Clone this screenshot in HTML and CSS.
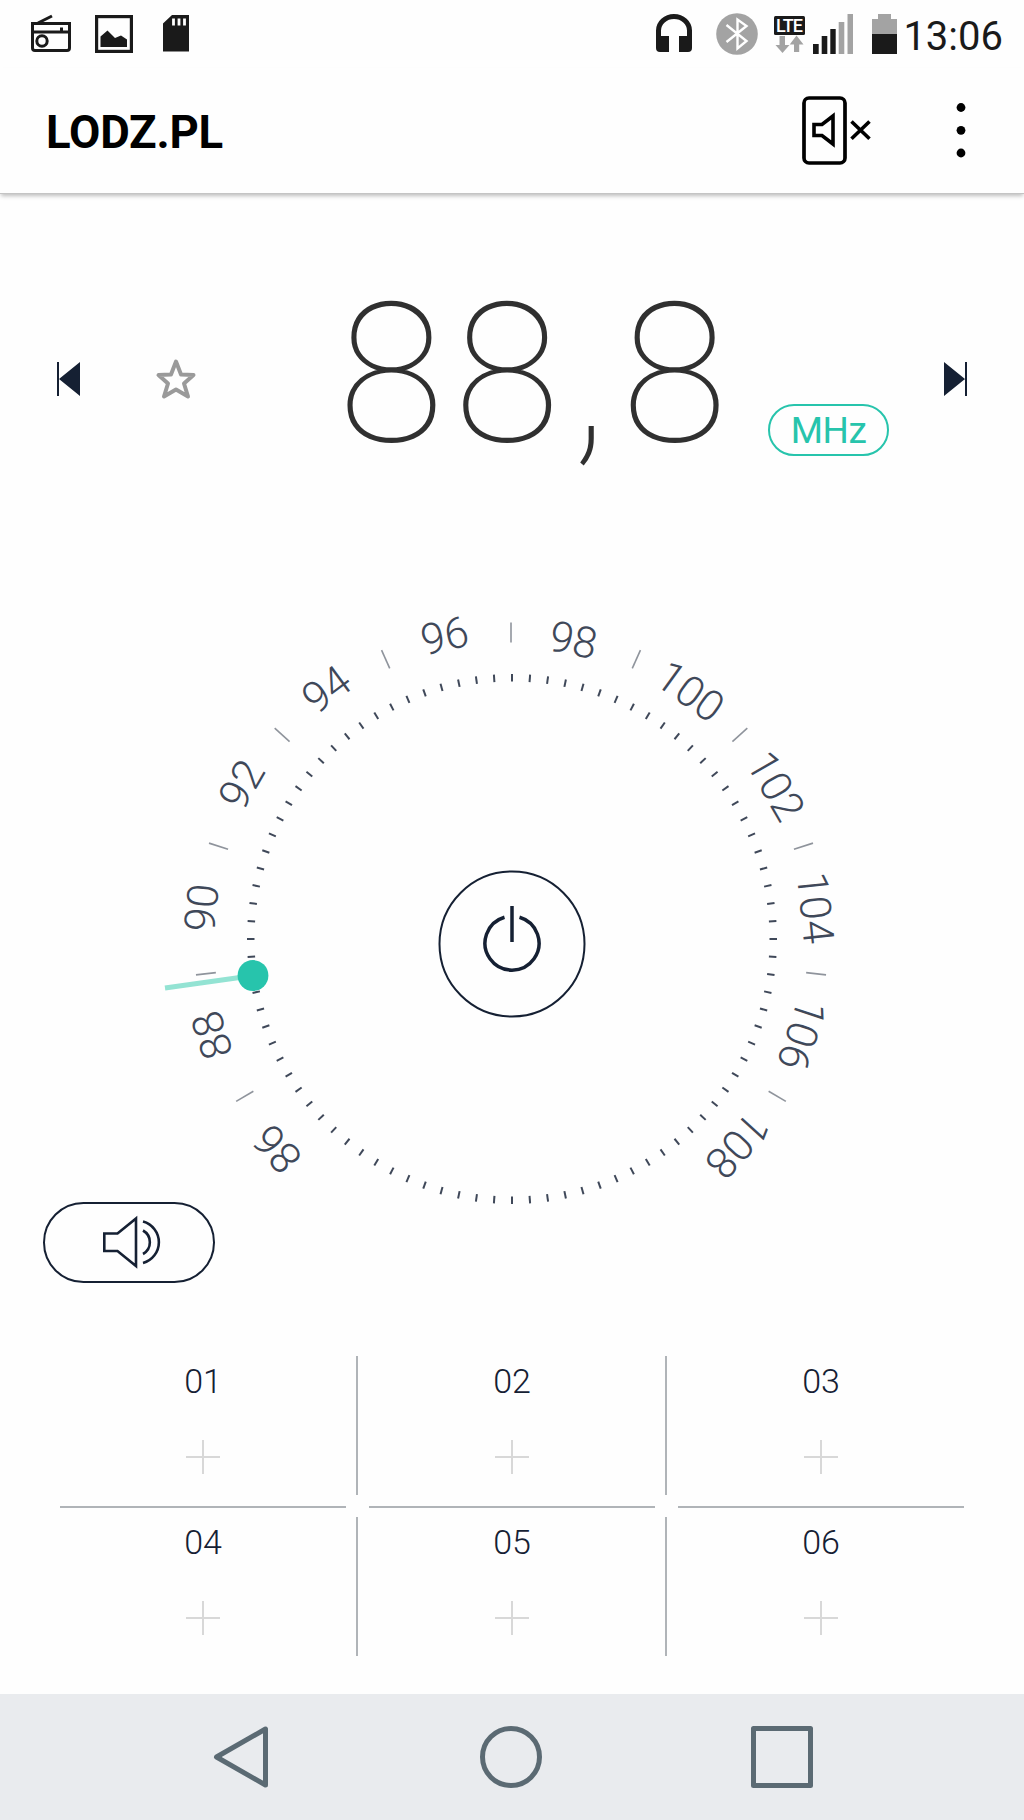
FILE: index.html
```html
<!DOCTYPE html>
<html lang="pl">
<head>
  <meta charset="UTF-8" />
  <meta name="viewport" content="width=device-width, initial-scale=1.0" />
  <title>FM Radio</title>
  <link rel="stylesheet" href="styles.css">
</head>
<body>

  <div class="status-bar">
    <svg class="radio" width="40" height="42" viewBox="0 0 40 42" fill="none" stroke="#1a1a1a" stroke-width="3">
      <path d="M7 10 L21 3" />
      <path d="M1.500 10.500 H38.500 V35 Q38.500 37.500 36 37.500 H4 Q1.500 37.500 1.500 35 Z M1.500 19 H38.500" />
      <circle cx="11" cy="28" r="5.200" />
      <path d="M30.500 14.500 V18" />
    </svg>
    <svg class="picture" width="38" height="42" viewBox="0 0 38 42">
      <rect x="1.600" y="3.600" width="34.800" height="34.800" fill="none" stroke="#1a1a1a" stroke-width="3.200" />
      <path d="M5.500 34 V23.500 L12.500 17.500 L20 25 L26 22.500 L32 26.500 V34 Z" fill="#1a1a1a" />
    </svg>
    <svg class="sd-card" width="26" height="42" viewBox="0 0 26 42">
      <path d="M9 2 H26 V38.500 H0 V10.500 Z" fill="#1a1a1a" />
      <path d="M10.500 5.500 V12.500 M16 5.500 V12.500 M21.500 5.500 V12.500" stroke="#fff" stroke-width="2.800" />
    </svg>

    <div class="status-right">
      <svg class="headphones" width="36" height="42" viewBox="0 0 36 42">
        <path d="M2.500 27 V17.500 A15.500 14 0 0 1 33.500 17.500 V27" fill="none" stroke="#1a1a1a" stroke-width="5" />
        <path d="M0 23 H13 V39 H4 Q0 39 0 35 Z M36 23 H23 V39 H32 Q36 39 36 35 Z" fill="#1a1a1a" />
      </svg>
      <svg class="bluetooth" width="42" height="42" viewBox="0 0 42 42">
        <circle cx="21" cy="21" r="20.800" fill="#a3a3a3" />
        <path d="M10.500 29 L30.500 13 L21.500 6.500 V35.500 L30.500 28 L10.500 12" fill="none" stroke="#fff" stroke-width="2.400" />
      </svg>
      <svg class="lte" width="31" height="42" viewBox="0 0 31 42">
        <rect y="3" width="31" height="19" rx="1.500" fill="#1a1a1a" />
        <text x="15.500" y="18.700" text-anchor="middle" textLength="27" class="lte-text">LTE</text>
        <path d="M5.500 23 H11 V32 H15.500 L8.500 40 L1.500 32 H5.500 Z M20 39 V31.500 H15.700 L22.500 22.500 L29.500 31.500 H25.200 V39 Z" fill="#a3a3a3" />
      </svg>
      <svg class="signal" width="40" height="42" viewBox="0 0 40 42">
        <path d="M0 31 H5.700 V41 H0 Z M8.700 23 H14.300 V41 H8.700 Z M17.300 16 H22.700 V41 H17.300 Z" fill="#1a1a1a" />
        <path d="M25.700 9 H31.300 V41 H25.700 Z M34.500 1 H40 V41 H34.500 Z" fill="#a3a3a3" />
      </svg>
      <svg class="battery" width="25" height="42" viewBox="0 0 25 42">
        <path d="M6 1 H19 V6 H25 V21 H0 V6 H6 Z" fill="#a3a3a3" />
        <rect y="21" width="25" height="20" fill="#1a1a1a" />
      </svg>
      <span class="time">13:06</span>
    </div>
  </div>

  <header class="title-bar">
    <h1>LODZ.PL</h1>
    <svg class="mute" width="70" height="70" viewBox="0 0 70 70" fill="none" stroke="#000">
      <rect x="2" y="2" width="41" height="65" rx="5" stroke-width="3.700" />
      <path d="M12 28.500 H20 L31 20 V48 L20 39.500 H12 Z" stroke-width="3.600" />
      <path d="M49.500 25.500 L67.500 42.800 M67.500 25.500 L49.500 42.800" stroke-width="3.600" />
    </svg>
    <svg class="menu" width="10" height="56" viewBox="0 0 10 56">
      <circle cx="5" cy="4.500" r="4.400" />
      <circle cx="5" cy="27.300" r="4.400" />
      <circle cx="5" cy="50" r="4.400" />
    </svg>
  </header>

  <main>
    <section class="display">
      <svg class="prev" width="23" height="34" viewBox="0 0 23 34" fill="#152033">
        <path d="M0 0 H2 V34 H0 Z M2 17 L23 0 V34 Z" />
      </svg>
      <svg class="star" width="42" height="42" viewBox="0 0 42 42">
        <path d="M21 3.500 L26 16.500 L38.500 17 L29 25.500 L33 38.500 L21 31.500 L9 38.500 L13 25.500 L3.500 17 L16 16.500 Z" />
      </svg>
      <div class="frequency">88<span class="comma">,</span>8</div>
      <div class="unit">MHz</div>
      <svg class="next" width="23" height="34" viewBox="0 0 23 34" fill="#152033">
        <path d="M21 0 H23 V34 H21 Z M21 17 L0 0 V34 Z" />
      </svg>
    </section>

    <section class="tuner">
      <svg id="dial" class="dial" width="680" height="680" viewBox="-340 -340 680 680">
        <g id="ring"></g>
        <g id="scale" transform="translate(-1 0.500)"></g>
        <g class="pointer">
          <path d="M-258 36.500 L-347 49" />
          <circle cx="-259" cy="36.500" r="15.400" />
        </g>
        <g class="power">
          <circle class="power-ring" r="72.500" cy="5" />
          <path d="M-7.500 -21.800 A27 27 0 1 0 7.500 -21.800 M0 -33 V3" />
        </g>
      </svg>
    </section>

    <button class="speaker" type="button" aria-label="Speaker">
      <svg width="60" height="54" viewBox="0 0 60 54" fill="none" stroke="#152033" stroke-width="2.600">
        <path d="M5.300 17.500 H18.500 L37 2.500 V50 L18.500 35 H5.300 Z" />
        <path d="M44 14.500 A13.500 13.500 0 0 1 44 38 M44 5.500 A21.500 21.500 0 0 1 44 47" />
      </svg>
    </button>

    <section class="presets">
      <div class="preset">01<span class="plus"></span></div>
      <i class="v-line"></i>
      <div class="preset">02<span class="plus"></span></div>
      <i class="v-line"></i>
      <div class="preset">03<span class="plus"></span></div>

      <i class="h-line"></i><i></i><i class="h-line"></i><i></i><i class="h-line"></i>

      <div class="preset">04<span class="plus"></span></div>
      <i class="v-line"></i>
      <div class="preset">05<span class="plus"></span></div>
      <i class="v-line"></i>
      <div class="preset">06<span class="plus"></span></div>
    </section>
  </main>

  <nav class="nav-bar">
    <svg width="62" height="66" viewBox="0 0 62 66"><path d="M56.500 5 V61 L7.500 33 Z" /></svg>
    <svg width="62" height="66" viewBox="0 0 62 66"><circle cx="31" cy="33" r="28.500" /></svg>
    <svg width="62" height="66" viewBox="0 0 62 66"><rect x="2.500" y="4.500" width="57" height="57" /></svg>
  </nav>

  <script>
    const ring = document.getElementById('ring');
    const scale = document.getElementById('scale');
    const TICKS = 92;
    const DEG_PER_MHZ = 12.05;

    function add(parent, tag, attrs, text) {
      const el = document.createElementNS('http://www.w3.org/2000/svg', tag);
      for (const key in attrs) el.setAttribute(key, attrs[key]);
      if (text) el.textContent = text;
      parent.appendChild(el);
    }

    // inner ring
    for (let i = 0; i < TICKS; i++) {
      add(ring, 'path', { class: 'tick', d: 'M0 -265 V-257.500', transform: `rotate(${i * 360 / TICKS})` });
    }

    // odd MHz get a long line, even MHz get a number
    for (let mhz = 86; mhz <= 108; mhz++) {
      const angle = (mhz - 97) * DEG_PER_MHZ;
      if (mhz % 2) {
        const r = mhz === 87 || mhz === 107 ? 299 : 297;
        add(scale, 'path', { class: 'mark', d: `M0 ${-r - 20} V${-r}`, transform: `rotate(${angle})` });
      } else {
        const r = mhz < 90 ? 299 : mhz < 98 ? 296 : 291;
        const shift = mhz < 90 ? 0.700 : mhz < 94 ? 0.200 : -0.300;
        add(scale, 'text', { class: 'label', y: -r, transform: `rotate(${angle + shift})` }, String(mhz));
      }
    }
  </script>

</body>
</html>
```
FILE: styles.css
```css
* {
  box-sizing: border-box;
}

body {
  margin: 0;
  height: 1820px;
  background: #fefefe;
  font-family: Roboto, "Liberation Sans", sans-serif;
  color: #152033;
  display: flex;
  flex-direction: column;
  overflow: hidden;
}

svg {
  display: block;
  flex: none;
  overflow: visible;
}

/* status bar */
.status-bar {
  height: 68px;
  padding: 13px 0 0 31px;
  display: flex;
  align-items: flex-start;
}

.picture {
  margin-left: 24px;
}

.sd-card {
  margin-left: 30px;
}

.status-right {
  margin-left: auto;
  padding-right: 21px;
  display: flex;
}

.bluetooth {
  margin-left: 24px;
}

.lte {
  margin-left: 16px;
}

.lte-text {
  font-size: 18px;
  font-weight: 500;
  fill: #fff;
}

.signal {
  margin-left: 8px;
}

.battery {
  margin-left: 19px;
}

.time {
  width: 106px;
  text-align: right;
  font-size: 40px;
  line-height: 47px;
  color: #1a1a1a;
}

/* title bar */
.title-bar {
  height: 126px;
  padding: 0 58px 0 46px;
  display: flex;
  align-items: center;
  border-bottom: 1px solid #c4c4c4;
  box-shadow: 0 3px 4px -1px rgba(0, 0, 0, 0.25);
}

.title-bar h1 {
  margin: 3px 0 0;
  font-size: 45.500px;
  font-weight: 700;
  letter-spacing: -0.200px;
  color: #000;
}

.mute {
  margin-left: auto;
}

.menu {
  margin-left: 84px;
}

/* frequency */
.display {
  height: 370px;
  padding: 0 57px;
  display: flex;
  align-items: center;
}

.star {
  margin-left: 75px;
  fill: none;
  stroke: #9a9a9a;
  stroke-width: 4;
  stroke-linejoin: round;
}

.frequency {
  width: 400px;
  margin: -8px 0 0 141px;
  font-size: 194px;
  line-height: 200px;
  font-weight: 100;
  letter-spacing: 9.500px;
  color: #303030;
  white-space: nowrap;
}

.comma {
  margin: 0 4px 0 2px;
}

.unit {
  width: 121px;
  height: 52px;
  margin: 102px 0 0 30px;
  border: 2px solid #27c4ac;
  border-radius: 26px;
  font-size: 37px;
  line-height: 49px;
  letter-spacing: -0.500px;
  text-align: center;
  color: #27c4ac;
}

.next {
  margin-left: auto;
}

/* dial */
.tuner {
  height: 638px;
  display: flex;
  justify-content: center;
}

.dial {
  margin-top: 35px;
}

.tick {
  stroke: #3f4859;
  stroke-width: 2;
}

.mark {
  stroke: #8f949c;
  stroke-width: 1.600;
}

.label {
  font-size: 43px;
  font-weight: 300;
  text-anchor: middle;
  fill: #3f4859;
}

.pointer path {
  stroke: #93e3d3;
  stroke-width: 5;
}

.pointer circle {
  fill: #27c4ac;
}

.power {
  fill: none;
  stroke: #152033;
  stroke-width: 3.500;
}

.power-ring {
  stroke-width: 2;
}

.speaker {
  width: 172px;
  height: 81px;
  margin-left: 42.500px;
  padding: 0;
  display: flex;
  align-items: center;
  justify-content: center;
  background: none;
  border: 2px solid #152033;
  border-radius: 41px;
}

/* presets */
.presets {
  margin: 73px 60px 0;
  display: grid;
  grid-template-columns: 286px 23px 286px 23px 286px;
  grid-template-rows: 139px 22px 139px;
}

.preset {
  padding-top: 5px;
  display: flex;
  flex-direction: column;
  align-items: center;
  font-size: 34px;
  line-height: 40px;
  font-weight: 300;
}

.plus {
  width: 34px;
  height: 34px;
  margin-top: 39px;
  background:
    linear-gradient(#d8d8d8, #d8d8d8) center / 34px 2px no-repeat,
    linear-gradient(#d8d8d8, #d8d8d8) center / 2px 34px no-repeat;
}

.v-line {
  width: 2px;
  margin-left: 10px;
  background: #b0b4b8;
}

.h-line {
  height: 2px;
  margin-top: 11px;
  background: #b0b4b8;
}

/* navigation */
.nav-bar {
  height: 126px;
  margin-top: auto;
  padding: 0 211px 0 209px;
  display: flex;
  align-items: center;
  justify-content: space-between;
  background: #e9ebee;
}

.nav-bar svg {
  fill: none;
  stroke: #5b6a73;
  stroke-width: 5;
  stroke-linejoin: round;
}
```
